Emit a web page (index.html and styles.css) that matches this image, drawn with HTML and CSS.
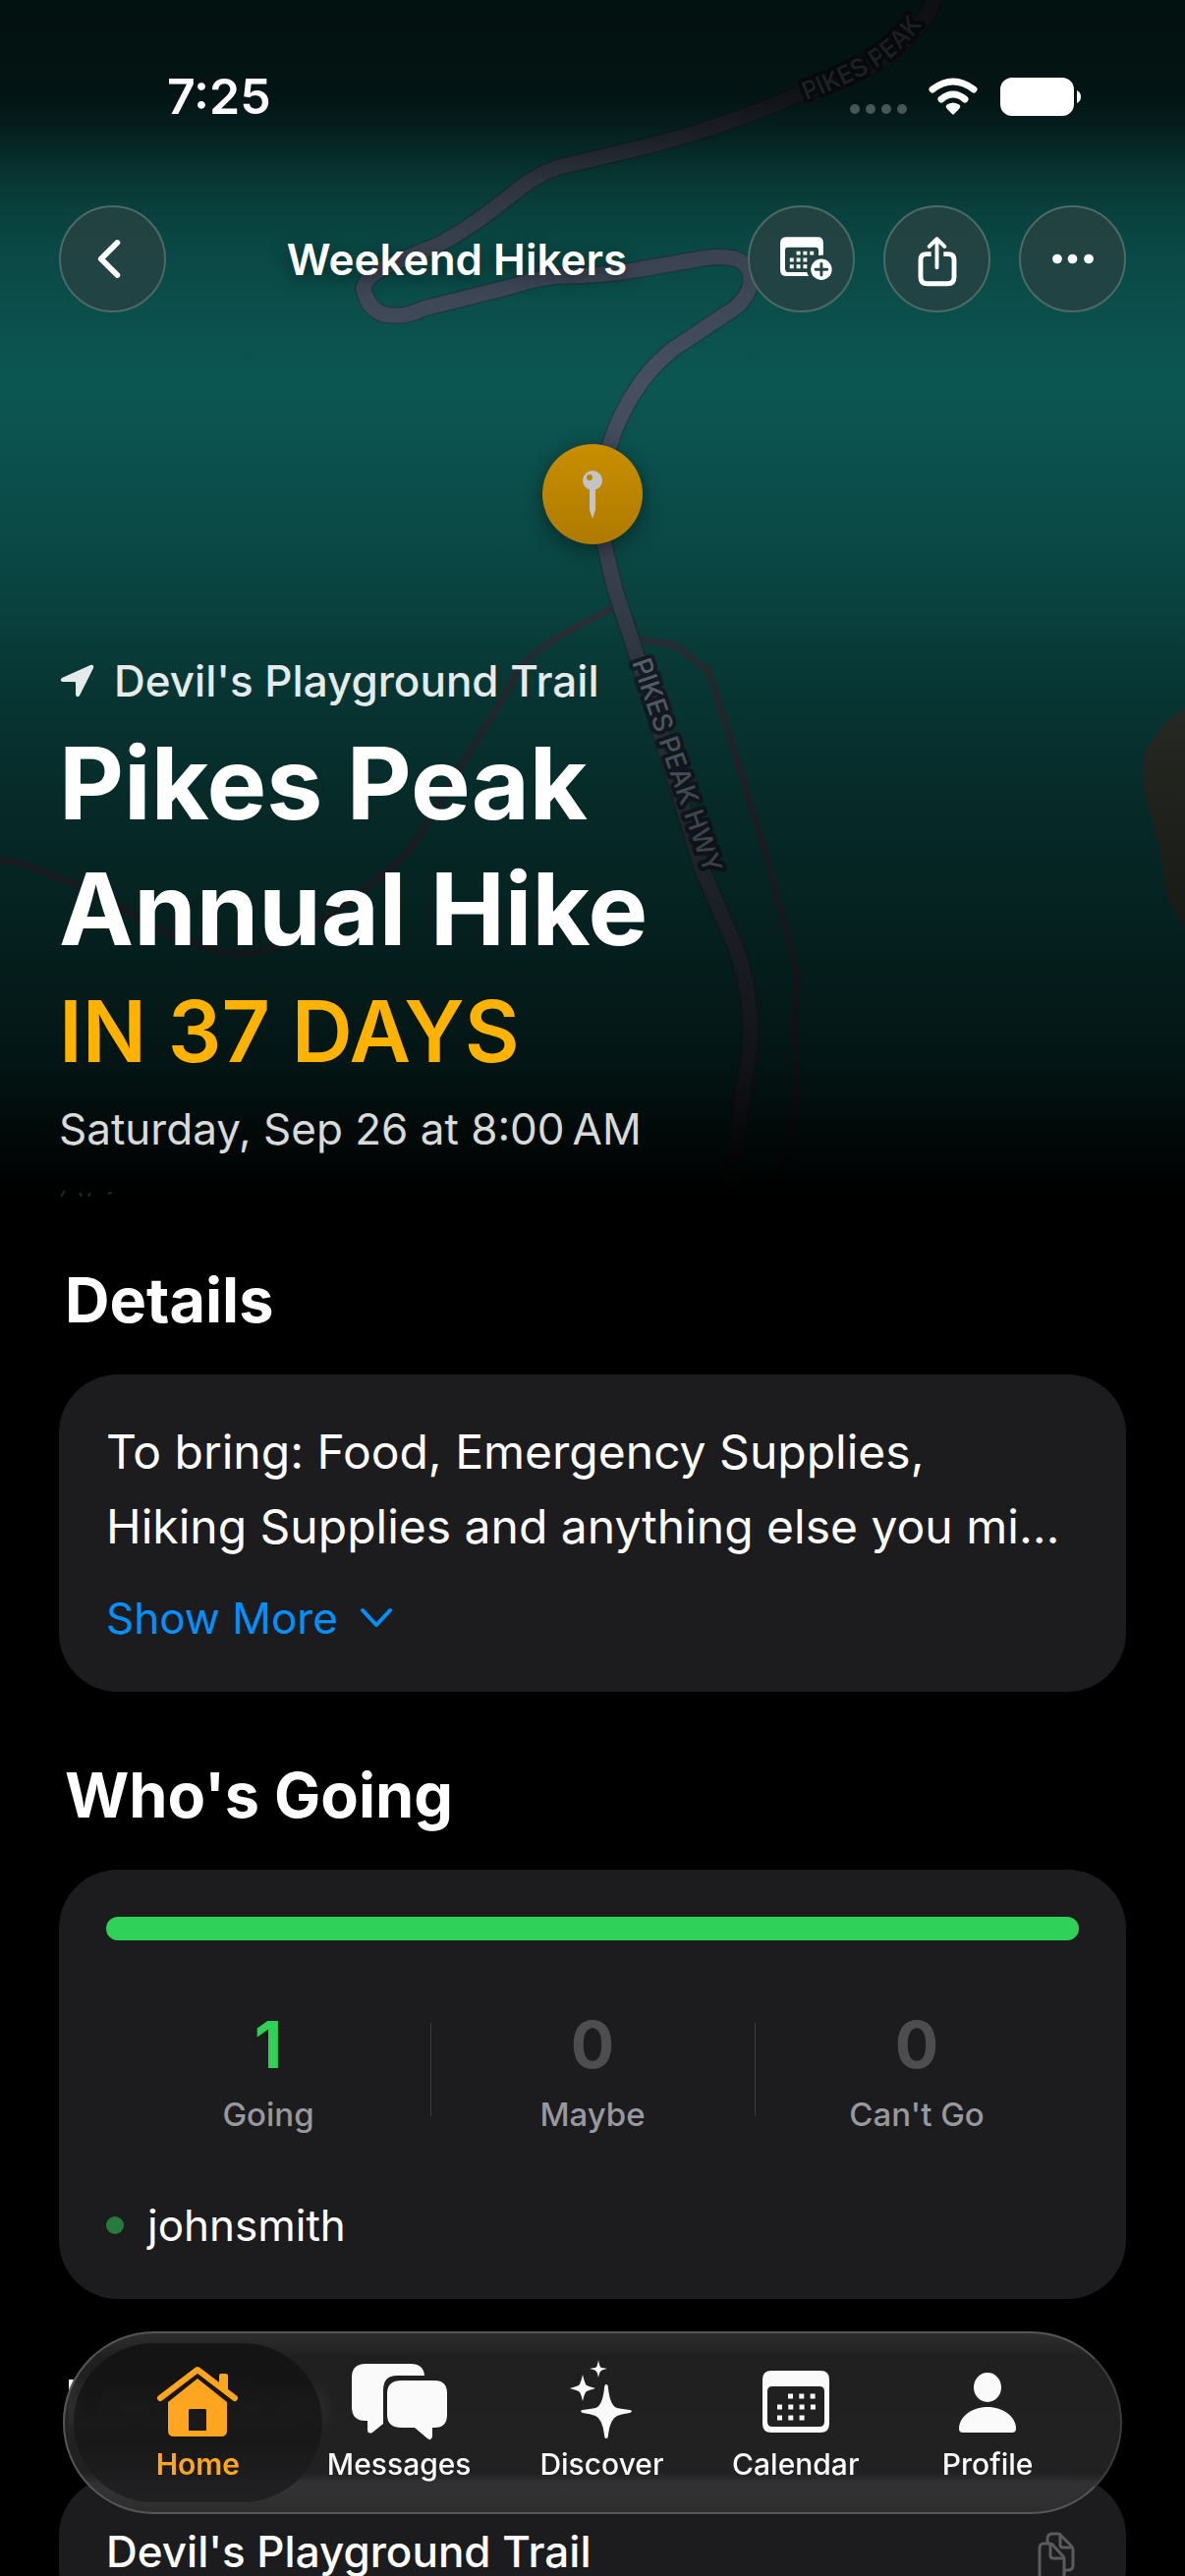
FILE: index.html
```html
<!DOCTYPE html>
<html lang="en">
<head>
<meta charset="utf-8">
<meta name="viewport" content="width=device-width, initial-scale=1">
<title>Weekend Hikers</title>
<link rel="stylesheet" href="styles.css">
</head>
<body>
<div class="screen">
  <header class="hero">
    <svg class="map" viewBox="0 0 1206 1218" preserveAspectRatio="xMidYMin slice" aria-hidden="true">
      <defs>
        <linearGradient id="shade" x1="0" y1="0" x2="0" y2="1218" gradientUnits="userSpaceOnUse">
          <stop offset="0" stop-opacity=".8"/>
          <stop offset=".082" stop-opacity=".76"/>
          <stop offset=".115" stop-opacity=".6"/>
          <stop offset=".156" stop-opacity=".33"/>
          <stop offset=".205" stop-opacity=".17"/>
          <stop offset=".32" stop-opacity="0"/>
          <stop offset=".41" stop-opacity=".1"/>
          <stop offset=".51" stop-opacity=".25"/>
          <stop offset=".575" stop-opacity=".38"/>
          <stop offset=".68" stop-opacity=".52"/>
          <stop offset=".79" stop-opacity=".64"/>
          <stop offset=".89" stop-opacity=".76"/>
          <stop offset=".95" stop-opacity=".9"/>
          <stop offset="1" stop-opacity="1"/>
        </linearGradient>
        <linearGradient id="pin" x1="0" y1="0" x2="0" y2="1">
          <stop offset="0" stop-color="#c98e00"/>
          <stop offset="1" stop-color="#ae7a00"/>
        </linearGradient>
        <filter id="glow" x="-50%" y="-50%" width="200%" height="200%"><feGaussianBlur stdDeviation="10"/></filter>
        <path id="label-top" d="M820 102Q893 75 918 49Q941 27 958 -8"/>
        <path id="label-road" d="M643 674L722 904"/>
      </defs>
      <rect width="1206" height="1218" fill="#0c5652"/>
      <path d="M1206 720L1188 733L1167 761Q1161 780 1163 800L1179 861L1188 914L1206 949Z" fill="#40453a"/>
      <g fill="none" stroke-linejoin="round">
        <path class="trail" d="M625 618L577 643Q545 662 531 678Q522 690 515 706L469 780L431 845L408 875L369 906L331 935L285 963Q246 978 208 964L154 943L100 910L31 882Q16 876 0 876"/>
        <path class="trail" d="M650 651L688 657L721 683L738 735L777 861L810 984V1131L800 1171L792 1218"/>
        <path class="road-edge" d="M952 -5Q946 18 908 55Q880 74 815 95Q740 128 654 150L569 170Q548 177 531 190Q480 232 446 249L400 268Q372 280 370 294Q376 321 400 321Q415 322 431 314L523 291Q550 282 569 281Q610 281 646 275L715 263Q764 256 764 284Q764 305 738 320L684 356Q665 372 654 387Q630 420 620 455L609 510L615 554L626 600L646 661L715 886L750 967Q764 1010 764 1049Q764 1070 758 1098L742 1218"/>
        <path class="road" d="M952 -5Q946 18 908 55Q880 74 815 95Q740 128 654 150L569 170Q548 177 531 190Q480 232 446 249L400 268Q372 280 370 294Q376 321 400 321Q415 322 431 314L523 291Q550 282 569 281Q610 281 646 275L715 263Q764 256 764 284Q764 305 738 320L684 356Q665 372 654 387Q630 420 620 455L609 510L615 554L626 600L646 661L715 886L750 967Q764 1010 764 1049Q764 1070 758 1098L742 1218"/>
      </g>
      <text class="road-name road-name-small"><textPath href="#label-top">PIKES PEAK</textPath></text>
      <text class="road-name"><textPath href="#label-road">PIKES PEAK HWY</textPath></text>
      <rect width="1206" height="1218" fill="url(#shade)"/>
      <circle cx="603" cy="508" r="52" opacity=".4" filter="url(#glow)"/>
      <circle cx="603" cy="503" r="51" fill="url(#pin)"/>
      <g fill="#c4c4c6">
        <circle cx="603" cy="489" r="10"/>
        <path d="M600 497H606V519L603 528L600 519Z"/>
      </g>
      <circle cx="600" cy="486" r="3" fill="#b98300"/>
      <path d="M66 1212L62 1218M81 1214L83 1218M92 1214L90 1218M110 1215L114 1214" stroke="#262626" stroke-width="2" fill="none"/>
    </svg>

    <div class="status">
      <span class="clock">7:25</span>
      <svg class="status-icons" viewBox="0 0 236 44" aria-hidden="true">
        <g fill="#465857"><circle cx="6" cy="35" r="5"/><circle cx="22" cy="35" r="5"/><circle cx="38" cy="35" r="5"/><circle cx="54" cy="35" r="5"/></g>
        <g fill="none" stroke="#fff" stroke-width="7" stroke-linecap="round">
          <path d="M85 15Q106 -1 127 15"/><path d="M94 25Q106 15 118 25"/>
        </g>
        <path d="M99 31Q106 26 113 31Q114 33 112 35L107 40Q106 41 105 40L100 35Q98 33 99 31Z" fill="#fff"/>
        <rect x="154" y="3" width="75" height="39" rx="12" fill="#fff"/>
        <path d="M232 16Q236 18 236 22.500T232 29Z" fill="#fff"/>
      </svg>
    </div>

    <nav class="toolbar">
      <button class="round" type="button" aria-label="Back">
        <svg viewBox="0 0 108 108"><path d="M59 37L42 54L59 71" fill="none" stroke="#fff" stroke-width="6" stroke-linecap="round" stroke-linejoin="round"/></svg>
      </button>
      <span class="group-name">Weekend Hikers</span>
      <button class="round" type="button" aria-label="Add to calendar">
        <svg viewBox="0 0 108 108">
          <path fill="#fff" fill-rule="evenodd" d="M39 31H71Q77 31 77 37V50Q72 51 72 50V45Q72 42 69 42H40Q37 42 37 45V64Q37 68 41 68H60Q60 71 62 72H39Q32 72 32 66V37Q32 31 39 31Z"/>
          <path stroke="#fff" stroke-width="4" stroke-dasharray="4 3" d="M49 48H68M42 55H60M42 62H60" fill="none"/>
          <circle cx="75" cy="65" r="11" fill="#fff"/>
          <path d="M75 59V71M69 65H81" stroke="#224444" stroke-width="3" stroke-linecap="round"/>
        </svg>
      </button>
      <button class="round" type="button" aria-label="Share">
        <svg viewBox="0 0 108 108" fill="none" stroke="#fff" stroke-linecap="round" stroke-linejoin="round">
          <path stroke-width="5" stroke-linecap="butt" d="M48 49H43Q37 49 37 55V73Q37 80 44 80H65Q72 80 72 73V55Q72 49 66 49H61"/>
          <path stroke-width="4" d="M54 34V63M46 41L54 33L62 41"/>
        </svg>
      </button>
      <button class="round" type="button" aria-label="More">
        <svg viewBox="0 0 108 108" fill="#fff"><circle cx="38" cy="54" r="5"/><circle cx="54" cy="54" r="5"/><circle cx="71" cy="54" r="5"/></svg>
      </button>
    </nav>

    <div class="summary">
      <p class="place">
        <svg viewBox="0 0 36 36" aria-hidden="true"><path d="M3 15L32 2Q36 1 35 5L21 33Q18 36 17 32V20Q17 19 16 19H4Q0 18 3 15Z" fill="#e4ebea"/></svg>
        Devil's Playground Trail
      </p>
      <h1>Pikes Peak<br>Annual Hike</h1>
      <p class="countdown">IN 37 DAYS</p>
      <p class="date">Saturday, Sep 26 at 8:00&#8239;AM</p>
    </div>
  </header>

  <main>
    <section>
      <h2>Details</h2>
      <div class="card details">
        <p>To bring: Food, Emergency Supplies,<br>Hiking Supplies and anything else you mi…</p>
        <button class="more" type="button">Show More
          <svg viewBox="0 0 34 22" aria-hidden="true"><path d="M3 3L17 18L31 3" fill="none" stroke="#0091ff" stroke-width="4" stroke-linecap="round" stroke-linejoin="round"/></svg>
        </button>
      </div>
    </section>

    <section>
      <h2>Who's Going</h2>
      <div class="card">
        <div class="bar"></div>
        <div class="stats">
          <div class="stat going"><strong>1</strong><span>Going</span></div>
          <div class="stat"><strong>0</strong><span>Maybe</span></div>
          <div class="stat"><strong>0</strong><span>Can't Go</span></div>
        </div>
        <p class="person">johnsmith</p>
      </div>
    </section>

    <section>
      <h2>Location</h2>
      <div class="card address">
        <span>Devil's Playground Trail</span>
        <button class="copy" type="button" aria-label="Copy address">
          <svg viewBox="0 0 38 50" fill="none" stroke="#5b5b5e" stroke-width="3" stroke-linejoin="round">
            <path d="M6 12H13Q15 12 16 14L26 25Q27 26 27 28V43Q27 48 22 48H6Q2 48 2 43V17Q2 12 6 12ZM13 13V24Q13 27 16 27H26"/>
            <path d="M10 11V7Q10 2 15 2H21Q23 2 24 4L34 14Q36 16 36 18V34Q36 39 31 39H28M23 3V13Q23 16 26 16H35"/>
          </svg>
        </button>
      </div>
    </section>
  </main>

  <nav class="tabs">
    <a class="tab active" href="#home">
      <svg viewBox="0 0 84 80">
        <path d="M4 35L42 6L80 35" fill="none" stroke="#ffa51f" stroke-width="6" stroke-linecap="round" stroke-linejoin="round"/>
        <path d="M64 12Q64 10 66 10H70Q73 10 73 12V30L64 23Z" fill="#ffa51f"/>
        <path fill="#ffa51f" fill-rule="evenodd" d="M42 15L72 39V68Q72 74 66 74H18Q12 74 12 68V39ZM34 46Q33 46 33 48V68H51V48Q51 46 50 46Z"/>
      </svg>
      Home</a>
    <a class="tab" href="#messages">
      <svg viewBox="0 0 100 80" fill="#fafafa">
        <path d="M16 0H62Q75 0 76 12H48Q34 12 34 27V61L23 70Q18 72 18 67V58H16Q2 58 2 44V14Q2 0 16 0Z"/>
        <path d="M53 17H86Q99 17 99 30V52Q99 65 86 65H84V74Q83 79 79 76L66 65H53Q38 65 38 52V30Q38 17 53 17Z"/>
      </svg>
      Messages</a>
    <a class="tab" href="#discover">
      <svg viewBox="0 0 84 80" fill="#fafafa">
        <path d="M47 21Q49 21 49 25Q51 43 58 45Q63 46 71 47Q75 48 71 50Q63 51 58 53Q51 56 49 72Q49 76 47 76Q45 76 45 72Q43 56 36 53Q31 51 23 50Q19 48 23 47Q31 46 36 45Q43 43 45 25Q45 21 47 21Z"/>
        <path d="M23 11Q25 20 27 22Q29 23 36 25Q29 27 27 28Q25 29 23 38Q21 29 19 28Q17 27 10 25Q17 23 19 22Q21 20 23 11Z"/>
        <path d="M39 -4Q40 3 42 4Q43 4 48 5Q43 6 42 7Q40 8 39 14Q38 8 36 7Q35 6 30 5Q35 4 36 4Q38 3 39 -4Z"/>
      </svg>
      Discover</a>
    <a class="tab" href="#calendar">
      <svg viewBox="0 0 84 80">
        <path fill="#fafafa" fill-rule="evenodd" d="M17 7H67Q76 7 76 16V61Q76 70 67 70H17Q8 70 8 61V16Q8 7 17 7ZM18 23Q13 23 13 28V59Q13 64 18 64H66Q71 64 71 59V28Q71 23 66 23Z"/>
        <path d="M34 33H63M23 44H63M23 55H52" stroke="#fafafa" stroke-width="5" stroke-dasharray="5 6.300" fill="none"/>
      </svg>
      Calendar</a>
    <a class="tab" href="#profile">
      <svg viewBox="0 0 84 80" fill="#fafafa">
        <ellipse cx="42" cy="24" rx="14" ry="15"/>
        <path d="M42 44C58 44 71 54 71 66Q71 70 67 70H17Q13 70 13 66C13 54 26 44 42 44Z"/>
      </svg>
      Profile</a>
  </nav>
</div>
</body>
</html>
```
FILE: styles.css
```css
* { box-sizing: border-box; }

body {
  margin: 0;
  background: #000;
  color: #fff;
  font-family: "Inter", "Liberation Sans", sans-serif;
  font-size: 44px;
  line-height: 56px;
}

h1, h2, p { margin: 0; }

button {
  padding: 0;
  border: 0;
  background: none;
  color: inherit;
  font: inherit;
}

svg { display: block; }

.screen {
  height: 100vh;
  overflow: hidden;
}

/* Hero with the map behind it */
.hero {
  position: relative;
  padding: 68px 60px 41px;
  overflow: hidden;
}

.map {
  position: absolute;
  inset: 0;
  width: 100%;
  height: 100%;
  z-index: -1;
}

.road-edge { stroke: #1d4046; stroke-width: 18px; }
.road { stroke: #454f60; stroke-width: 15px; }
.trail { stroke: #373f4a; stroke-width: 7px; }

.road-name {
  font-size: 27px;
  font-weight: 500;
  fill: #8291a0;
  stroke: #1f2836;
  stroke-width: 8px;
  stroke-linejoin: round;
  paint-order: stroke;
}

.road-name-small { font-size: 25px; }

.status {
  display: flex;
  justify-content: space-between;
  align-items: center;
  height: 60px;
  padding: 0 46px 0 110px;
}

.clock {
  font-size: 50px;
  font-weight: 600;
}

.status-icons { width: 236px; height: 44px; }

.toolbar {
  display: flex;
  align-items: center;
  gap: 29px;
  margin-top: 81px;
}

.round {
  flex: none;
  width: 109px;
  height: 109px;
  border: 2px solid #4c6a68;
  border-radius: 50%;
  background: rgba(35, 67, 67, .96);
}

.round svg { width: 100%; height: 100%; }

.group-name {
  flex: 1;
  text-align: center;
  font-weight: 600;
  text-shadow: 0 4px 16px rgba(0, 0, 0, .5);
}

.summary { margin-top: 347px; }

.place {
  display: flex;
  align-items: center;
  gap: 20px;
  color: #e4ebea;
  font-weight: 500;
}

.place svg { width: 36px; height: 36px; }

h1 {
  margin-top: 12px;
  font-size: 102px;
  font-weight: 700;
  line-height: 128px;
}

.countdown {
  margin-top: 7px;
  color: #ffb300;
  font-size: 86px;
  font-weight: 600;
  line-height: 108px;
}

.date {
  margin-top: 17px;
  color: #d9dbdb;
}

/* Content sections */
main { padding: 0 60px; }

h2 {
  padding: 67px 6px 38px;
  font-size: 63px;
  font-weight: 700;
  line-height: 76px;
}

.card {
  padding: 48px 48px 47px;
  border-radius: 60px;
  background: #1c1c1e;
}

.details { padding-top: 41px; }

.details p {
  font-size: 48px;
  line-height: 76px;
}

.more {
  display: flex;
  align-items: center;
  gap: 22px;
  margin-top: 27px;
  color: #0091ff;
}

.more svg { width: 34px; height: 22px; }

.bar {
  height: 24px;
  border-radius: 12px;
  background: #30d158;
}

.stats {
  display: grid;
  grid-template-columns: repeat(3, 1fr);
  margin-top: 66px;
}

.stat {
  position: relative;
  display: flex;
  flex-direction: column;
  align-items: center;
  gap: 11px;
}

.stat + .stat::before {
  content: "";
  position: absolute;
  left: 0;
  top: 18px;
  bottom: 18px;
  width: 1px;
  background: #3d3d40;
}

.stat strong {
  color: #4d4d4f;
  font-size: 66px;
  font-weight: 700;
  line-height: 80px;
}

.stat span {
  color: #98989f;
  font-size: 33px;
  font-weight: 500;
  line-height: 40px;
}

.stat.going strong { color: #30d158; }

.person {
  display: flex;
  align-items: center;
  gap: 24px;
  margin-top: 65px;
}

.person::before {
  content: "";
  width: 18px;
  height: 18px;
  border-radius: 50%;
  background: #267a3b;
}

.address {
  display: flex;
  justify-content: space-between;
  font-weight: 500;
}

.copy { width: 38px; height: 50px; margin: 8px 4px 0 0; }

/* Floating tab bar */
.tabs {
  position: fixed;
  left: 64px;
  right: 64px;
  bottom: 63px;
  display: grid;
  grid-template-columns: 205fr 205fr 208fr 187fr 204fr;
  height: 186px;
  padding: 10px 33px;
  border: 2px solid #565658;
  border-right-color: #3c3c3e;
  border-radius: 93px;
  background: linear-gradient(rgba(48, 48, 48, .94), rgba(34, 34, 34, .92) 14%, rgba(36, 36, 36, .92) 78%, rgba(51, 51, 53, .96) 84%, rgba(50, 50, 52, .96) 90%, rgba(46, 46, 46, .96));
  backdrop-filter: blur(8px);
}

.tab {
  position: relative;
  display: flex;
  flex-direction: column;
  align-items: center;
  padding-top: 21px;
  color: #fafafa;
  font-size: 30px;
  font-weight: 500;
  line-height: 44px;
  text-decoration: none;
}

.tab svg {
  height: 80px;
  overflow: visible;
}

.active {
  color: #ffa51f;
  font-weight: 600;
}

.active::before {
  content: "";
  position: absolute;
  inset: 0 -24px;
  z-index: -1;
  border-radius: 81px;
  background: linear-gradient(rgba(16, 16, 16, .8), rgba(20, 20, 20, .7) 60%, #202022);
}
```
